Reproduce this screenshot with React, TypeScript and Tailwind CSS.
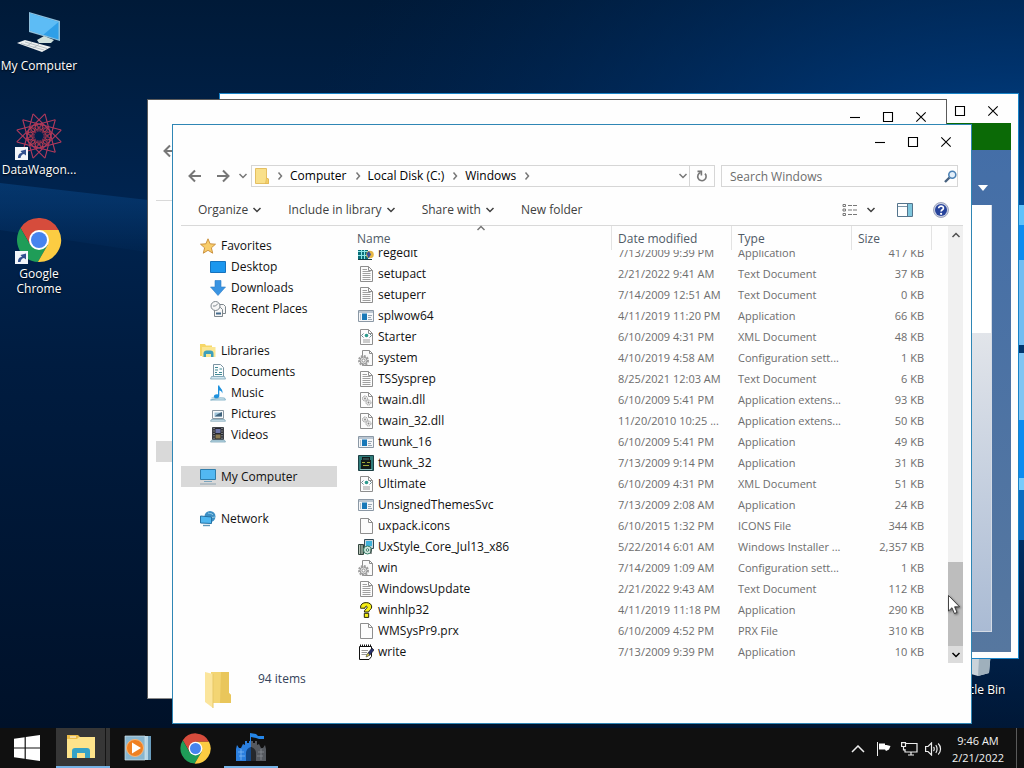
import { useLayoutEffect, useRef } from "react";
import type { ReactNode } from "react";

type FileKind =
  | "regedit"
  | "text"
  | "app"
  | "xml"
  | "config"
  | "dll"
  | "twunk"
  | "blank"
  | "installer"
  | "help"
  | "write";

interface FileRow {
  name: string;
  date: string;
  type: string;
  size: string;
  kind: FileKind;
}

const files: FileRow[] = [
  { name: "regedit", date: "7/13/2009 9:39 PM", type: "Application", size: "417 KB", kind: "regedit" },
  { name: "setupact", date: "2/21/2022 9:41 AM", type: "Text Document", size: "37 KB", kind: "text" },
  { name: "setuperr", date: "7/14/2009 12:51 AM", type: "Text Document", size: "0 KB", kind: "text" },
  { name: "splwow64", date: "4/11/2019 11:20 PM", type: "Application", size: "66 KB", kind: "app" },
  { name: "Starter", date: "6/10/2009 4:31 PM", type: "XML Document", size: "48 KB", kind: "xml" },
  { name: "system", date: "4/10/2019 4:58 AM", type: "Configuration sett...", size: "1 KB", kind: "config" },
  { name: "TSSysprep", date: "8/25/2021 12:03 AM", type: "Text Document", size: "6 KB", kind: "text" },
  { name: "twain.dll", date: "6/10/2009 5:41 PM", type: "Application extens...", size: "93 KB", kind: "dll" },
  { name: "twain_32.dll", date: "11/20/2010 10:25 ...", type: "Application extens...", size: "50 KB", kind: "dll" },
  { name: "twunk_16", date: "6/10/2009 5:41 PM", type: "Application", size: "49 KB", kind: "app" },
  { name: "twunk_32", date: "7/13/2009 9:14 PM", type: "Application", size: "31 KB", kind: "twunk" },
  { name: "Ultimate", date: "6/10/2009 4:31 PM", type: "XML Document", size: "51 KB", kind: "xml" },
  { name: "UnsignedThemesSvc", date: "7/13/2009 2:08 AM", type: "Application", size: "24 KB", kind: "app" },
  { name: "uxpack.icons", date: "6/10/2015 1:32 PM", type: "ICONS File", size: "344 KB", kind: "blank" },
  { name: "UxStyle_Core_Jul13_x86", date: "5/22/2014 6:01 AM", type: "Windows Installer ...", size: "2,357 KB", kind: "installer" },
  { name: "win", date: "7/14/2009 1:09 AM", type: "Configuration sett...", size: "1 KB", kind: "config" },
  { name: "WindowsUpdate", date: "2/21/2022 9:43 AM", type: "Text Document", size: "112 KB", kind: "text" },
  { name: "winhlp32", date: "4/11/2019 11:18 PM", type: "Application", size: "290 KB", kind: "help" },
  { name: "WMSysPr9.prx", date: "6/10/2009 4:52 PM", type: "PRX File", size: "310 KB", kind: "blank" },
  { name: "write", date: "7/13/2009 9:39 PM", type: "Application", size: "10 KB", kind: "write" },
];

/* ---------- small glyphs ---------- */

function Chevron({ dir = "down", className = "" }: { dir?: "down" | "up" | "right"; className?: string }) {
  const d = { down: "M1.5 3L5 6.5 8.5 3", up: "M1.5 7L5 3.5 8.5 7", right: "M3.5 1.5L6.5 5 3.5 8.5" }[dir];
  return (
    <svg viewBox="0 0 10 10" className={`size-[10px] shrink-0 ${className}`} fill="none" stroke="currentColor" strokeWidth="1.5">
      <path d={d} />
    </svg>
  );
}

function Arrow({ flip = false }: { flip?: boolean }) {
  return (
    <svg viewBox="0 0 14 14" className={`size-[14px] ${flip ? "-scale-x-100" : ""}`} fill="none" stroke="#777" strokeWidth="2">
      <path d="M13 7H2M7 1.5L1.5 7 7 12.5" />
    </svg>
  );
}

function Page({ children }: { children?: ReactNode }) {
  return (
    <g>
      <path d="M2.5 .5H10.5L14.5 4.5V15.5H2.5Z" fill="#fcfcfc" stroke="#8e8e8e" />
      <path d="M10.5 .5V4.5H14.5" fill="none" stroke="#8e8e8e" />
      {children}
    </g>
  );
}

const fileGlyphs: Record<FileKind, ReactNode> = {
  regedit: (
    <g>
      <path d="M0 2H10V14H0Z" fill="#0b6e78" />
      <path d="M0 6.5H10M0 10.5H10M3.5 2V14M6.5 2V14" stroke="#8fe6e8" />
      <circle cx="12" cy="9.5" r="3.8" fill="#e5b645" />
      <path d="M8.5 8.5L11 6 13 9.5 10.5 13.5Z" fill="#3b4f9e" />
      <path d="M0 14.5H14" stroke="#163b42" />
    </g>
  ),
  text: (
    <Page>
      <path d="M4.5 3.5H9M4.5 5.5H12.5M4.5 7.5H12.5M4.5 9.5H12.5M4.5 11.5H12.5M4.5 13.5H12.5" stroke="#a0a0a0" />
    </Page>
  ),
  app: (
    <g>
      <path d="M.5 2.5H15.5V13.5H.5Z" fill="#f4f6f8" stroke="#8b98a5" />
      <path d="M1 4H15" stroke="#bcc7d2" strokeWidth="2" />
      <path d="M4 5.5H9V12H4Z" fill="#1878b8" />
      <path d="M2.5 6V12" stroke="#b8c4cf" />
      <path d="M10 7.5H14M10 9.5H13M10 11.5H14" stroke="#9aa7b4" />
    </g>
  ),
  xml: (
    <Page>
      <path d="M5.5 4.5L3.5 6.5 5.5 8.5M11.5 4.5L13.5 6.5 11.5 8.5" fill="none" stroke="#6e8791" />
      <circle cx="8.5" cy="6.5" r="1.8" fill="#2c9a8c" />
      <path d="M5 11H12M5 13H12" stroke="#9a9a9a" />
    </Page>
  ),
  config: (
    <g>
      <path d="M4.5 .5H11.5L14.5 3.5V15.5H4.5Z" fill="#fafafa" stroke="#8e8e8e" />
      <path d="M11.5 .5V3.5H14.5" fill="none" stroke="#8e8e8e" />
      <circle cx="5.5" cy="10.5" r="4.5" fill="none" stroke="#a0a0a0" strokeWidth="2" strokeDasharray="2 1" />
      <circle cx="5.5" cy="10.5" r="3.5" fill="#e2e2e2" stroke="#959595" />
      <circle cx="5.5" cy="10.5" r="1.5" fill="#fff" stroke="#959595" />
    </g>
  ),
  dll: (
    <Page>
      <circle cx="7" cy="6.5" r="2.5" fill="#ececec" stroke="#9a9a9a" strokeDasharray="1.5 .6" />
      <circle cx="10.5" cy="10.5" r="2.5" fill="#ececec" stroke="#9a9a9a" strokeDasharray="1.5 .6" />
      <circle cx="7" cy="6.5" r=".9" fill="#888" />
      <circle cx="10.5" cy="10.5" r=".9" fill="#888" />
    </Page>
  ),
  twunk: (
    <g>
      <path d="M.5 .5H15.5V15.5H.5Z" fill="#2f7c7a" stroke="#1d3f44" />
      <path d="M4 2H12V5H13V14H3V5H4Z" fill="#131a1a" />
      <path d="M4 7.5H7M9 7.5H12M5 10.5H11" stroke="#a0a83a" />
      <path d="M6 3V5M8 3V5M10 3V5" stroke="#4c7774" />
      <path d="M2 14.5H14" stroke="#8fc2c0" />
    </g>
  ),
  blank: <Page />,
  installer: (
    <g>
      <path d="M6.5 .5H15.5V9.5H6.5Z" fill="#c9d6de" stroke="#344b57" />
      <path d="M8 2H14V7H8Z" fill="#3fb2dc" />
      <path d="M.5 5.5H5.5V15.5H.5Z" fill="#b9c6b9" stroke="#33443d" />
      <path d="M2.5 6V15M4 6V15" stroke="#53685f" />
      <circle cx="9.5" cy="11" r="4" fill="#d5e7df" stroke="#317c66" />
      <circle cx="9.5" cy="11" r="1.3" fill="#fff" stroke="#317c66" />
      <path d="M13 10V15" stroke="#333" />
    </g>
  ),
  help: (
    <path
      d="M2.5 5.5C2.5 2.2 4.8.6 8.2.6S13.7 2.3 13.7 5C13.7 7.5 11 8 10.6 10H6.3C6.3 7.3 9.2 6.6 9.2 5.2 9.2 3.7 7 3.8 7 6.2H2.5ZM6.3 11.3H10.7V15.4H6.3Z"
      fill="#f5ee16"
      stroke="#26260a"
    />
  ),
  write: (
    <g>
      <path d="M1.5 2.5H13.5V12.5L11 15.5H1.5Z" fill="#fff" stroke="#111" />
      <path d="M2 1.5H14" stroke="#111" strokeDasharray="1 1" strokeWidth="2" />
      <path d="M3.5 6.5H10M3.5 8.5H9M3.5 10.5H9" stroke="#999" />
      <path d="M8 13L10 9 14 4 16 6 12 11Z" fill="#27306f" stroke="#111" strokeWidth=".6" />
      <path d="M8 13L10 9 11.5 11Z" fill="#d8c94a" />
    </g>
  ),
};

function FileIcon({ kind }: { kind: FileKind }) {
  return (
    <svg viewBox="0 0 16 16" className="size-4 shrink-0">
      {fileGlyphs[kind]}
    </svg>
  );
}

/* ---------- sidebar icons ---------- */

const placeGlyphs: Record<string, ReactNode> = {
  Favorites: (
    <path d="M8 .8L10.1 5.8 15.5 6.2 11.4 9.8 12.7 15.2 8 12.3 3.3 15.2 4.6 9.8 .5 6.2 5.9 5.8Z" fill="#f8cd6a" stroke="#c68a36" strokeWidth=".9" />
  ),
  Desktop: <path d="M.5 2.5H15.5V13.5H.5Z" fill="#1c97ee" stroke="#1672bd" />,
  Downloads: <path d="M5 .5H11V7H15.5L8 15.5 .5 7H5Z" fill="#3a94e2" stroke="#2c7cc6" strokeWidth=".6" />,
  "Recent Places": (
    <g fill="#f7f7f7" stroke="#7d868c">
      <path d="M9.5 3.5H13.5L15.5 5.5V12.5H9.5Z" />
      <path d="M4.5 6.5H10.5L12.5 8.5V15.5H4.5Z" />
      <circle cx="5.5" cy="5" r="4.5" />
      <path d="M5.5 5L8 2.5M3 5H5.5" />
      <path d="M6 12.5H11" stroke="#446b8c" strokeWidth="2" />
    </g>
  ),
  Libraries: (
    <g>
      <path d="M0 1H5L6 2.5H12V13H0Z" fill="#f6d768" />
      <path d="M2 4H15.5V14H2Z" fill="#fbe692" />
      <path d="M3.5 14V10.5C3.5 8.5 5 7.5 6.5 7.5H10.5C12.3 7.5 13.5 8.5 13.5 10.5V14H11V11H6V14Z" fill="#3d9fbc" />
    </g>
  ),
  Documents: (
    <g>
      <path d="M3.5 .5H10.5L13.5 3.5V12.5H3.5Z" fill="#fafcfd" stroke="#7b94a2" />
      <path d="M5 3.5H8M9.5 5H12M5 6H8M5 8.5H7M9 8.5H12M5 10.5H12" stroke="#3f8994" strokeWidth="1.2" />
      <path d="M1.5 12.5H14.5L15.5 15H.5Z" fill="#d2e6ef" stroke="#7ca4b6" strokeWidth=".8" />
    </g>
  ),
  Music: (
    <g>
      <path d="M8 .5H9.3C9.6 3 13.5 4.5 12.3 8.5 11.8 6.5 10.8 5.8 9.3 5.5V11C9.3 14.2 3.5 14.3 3.8 11.5 4 9.6 6.3 8.8 8 9.4Z" fill="#1e91dd" />
      <path d="M1.5 13L5 12.8M10 12.8L14.5 13 15.5 15H.5Z" fill="#d2e6ef" stroke="#72a8c2" strokeWidth=".8" />
    </g>
  ),
  Pictures: (
    <g>
      <path d="M2.5 4.5H13.5V12.5H2.5Z" fill="#f8fafb" stroke="#8a97a1" />
      <path d="M4.5 6.5H11.5V10.5H4.5Z" fill="#9cc2d8" />
      <path d="M4.5 10.5L8 8 12 6V10.5Z" fill="#41637c" />
      <path d="M1.5 13.5H14.5L15.5 15.2H.5Z" fill="#d2e6ef" stroke="#7ca4b6" strokeWidth=".8" />
    </g>
  ),
  Videos: (
    <g>
      <path d="M2.5 .5H13.5V12.5H2.5Z" fill="#26282e" stroke="#3d4046" />
      <path d="M4 1V12M12 1V12" stroke="#c5c8cc" strokeDasharray="1.2 1.2" />
      <path d="M5.5 2H10.5V6H5.5Z" fill="#6c75a8" />
      <path d="M5.5 7.5H10.5V11.5H5.5Z" fill="#8b7b52" />
      <path d="M1.5 13.2H14.5L15.5 15H.5Z" fill="#b8d8e6" stroke="#7ca4b6" strokeWidth=".8" />
    </g>
  ),
  "My Computer": (
    <g>
      <path d="M.5 .5H15.5V10.5H.5Z" fill="#52b8f2" stroke="#2f7dab" />
      <path d="M4 12.5H12" stroke="#7aa5be" />
      <path d="M0 15H16" stroke="#8ea3b0" />
    </g>
  ),
  Network: (
    <g>
      <circle cx="10" cy="5.5" r="5.5" fill="#3d8fc4" />
      <path d="M8 2C10 3 12 2 13 4M11 6C12 7 14 6 15 6" fill="none" stroke="#93cbe6" />
      <path d="M.5 5L11.5 6V12.5L.5 12Z" fill="#4fb7f0" stroke="#2672a4" />
      <path d="M3 14.5H10" stroke="#5f97b8" strokeWidth="1.4" />
    </g>
  ),
};

function Place({ name, child = false, selected = false }: { name: string; child?: boolean; selected?: boolean }) {
  return (
    <li className={selected ? "bg-[#d9d9d9]" : ""}>
      <a href="#" className={`flex h-[21px] items-center gap-[5px] ${child ? "pl-[29px]" : "pl-[19px]"}`}>
        <svg viewBox="0 0 16 16" className="size-4 shrink-0">
          {placeGlyphs[name]}
        </svg>
        {name}
      </a>
    </li>
  );
}

function Sidebar() {
  return (
    <nav className="flex w-[156px] shrink-0 flex-col gap-[21px] pt-[9px] text-[#111]">
      <ul>
        <Place name="Favorites" />
        <Place name="Desktop" child />
        <Place name="Downloads" child />
        <Place name="Recent Places" child />
      </ul>
      <ul>
        <Place name="Libraries" />
        <Place name="Documents" child />
        <Place name="Music" child />
        <Place name="Pictures" child />
        <Place name="Videos" child />
      </ul>
      <ul>
        <Place name="My Computer" selected />
      </ul>
      <ul>
        <Place name="Network" />
      </ul>
    </nav>
  );
}

/* ---------- windows ---------- */

function WindowFrame({ className, children }: { className: string; children: ReactNode }) {
  return (
    <section className={`absolute flex flex-col border bg-[#fefefe] ${className}`}>
      <header className="flex shrink-0 justify-end pr-[9px] pt-[7px]">
        {[
          { label: "Minimize", d: "M0 5.5H10" },
          { label: "Maximize", d: "M.5 .5H9.5V9.5H.5Z" },
          { label: "Close", d: "M.3 .3L9.7 9.7M9.7 .3L.3 9.7" },
        ].map((button) => (
          <button key={button.label} aria-label={button.label} className="flex h-5 w-[33px] items-center justify-center">
            <svg viewBox="0 0 10 10" className="size-[10px] overflow-visible" fill="none" stroke="#000" strokeWidth="1.1">
              <path d={button.d} />
            </svg>
          </button>
        ))}
      </header>
      {children}
    </section>
  );
}

function AddressBar() {
  return (
    <div className="mt-[13px] flex h-[22px] items-center pl-2 pr-[13px]">
      <button aria-label="Back" className="flex w-7 justify-center">
        <Arrow />
      </button>
      <button aria-label="Forward" className="flex w-7 justify-center">
        <Arrow flip />
      </button>
      <button aria-label="Recent pages" className="flex w-3 justify-center text-[#777]">
        <Chevron />
      </button>
      <div className="ml-0.5 flex h-full flex-1 items-center border border-[#d6d6d6] pl-[3px]">
        <svg viewBox="0 0 14 16" className="h-4 w-[14px]">
          <path d="M.5 .5H11.5V10L13.5 11V15.5H.5Z" fill="#f9e08a" stroke="#e4bf62" />
          <path d="M11.5 10L10.5 15.5H13.5V11Z" fill="#f3cf6d" stroke="#dfb34f" strokeWidth=".6" />
        </svg>
        {["Computer", "Local Disk (C:)", "Windows"].map((crumb) => (
          <span key={crumb} className="flex items-center">
            <Chevron dir="right" className="ml-1.5 mr-[5px] text-[#777]" />
            <a href="#" className="text-black">
              {crumb}
            </a>
          </span>
        ))}
        <Chevron dir="right" className="ml-1.5 text-[#777]" />
        <button aria-label="Previous locations" className="ml-auto mr-px text-[#777]">
          <Chevron />
        </button>
        <button aria-label="Refresh" className="flex h-full w-[25px] items-center justify-center border-l border-[#d6d6d6]">
          <svg viewBox="0 0 12 12" className="size-3" fill="none" stroke="#777" strokeWidth="1.6">
            <path d="M9 3.6A4.2 4.2 0 1 1 4.6 2.5" />
            <path d="M1.5 1.4H5.4V5.4" />
          </svg>
        </button>
      </div>
      <div className="ml-1.5 flex h-full w-[237px] items-center border border-[#d6d6d6] pl-2">
        <input
          type="text"
          aria-label="Search Windows"
          placeholder="Search Windows"
          className="h-full min-w-0 flex-1 bg-transparent outline-none placeholder:text-[#6d6d6d]"
        />
        <svg viewBox="0 0 13 13" className="size-[13px]" fill="none">
          <path d="M1 12L5.5 7.5" stroke="#47617f" strokeWidth="2.4" />
          <circle cx="8.3" cy="4.7" r="3.5" fill="#e3effa" stroke="#4d82b5" strokeWidth="1.6" />
        </svg>
      </div>
    </div>
  );
}

function Toolbar() {
  return (
    <div className="mx-2 flex h-[39px] items-center border-b border-[#d9d9d9] pl-[17px] pr-[14px] pt-2 text-[#3f3f3f]">
      <div className="flex items-center gap-[26px]">
        <button className="flex items-center gap-1">
          Organize <Chevron />
        </button>
        <button className="flex items-center gap-1">
          Include in library <Chevron />
        </button>
        <button className="flex items-center gap-1">
          Share with <Chevron />
        </button>
        <button>New folder</button>
      </div>
      <div className="ml-auto flex items-center">
        <button aria-label="Change view" className="flex items-center gap-2">
          <svg viewBox="0 0 16 14" className="h-[14px] w-4" fill="none" stroke="#777">
            <path d="M1 1.5H3.5V3.5H1ZM1 6H3.5V8H1ZM1 10.5H3.5V12.5H1Z" />
            <path d="M6 2.5H10M11 2.5H15M6 7H10M11 7H15M6 11.5H10M11 11.5H15" />
          </svg>
          <Chevron />
        </button>
        <button aria-label="Preview pane" className="ml-[21px]">
          <svg viewBox="0 0 16 14" className="h-[14px] w-4">
            <path d="M.5 .5H15.5V13.5H.5Z" fill="#fdfeff" stroke="#54748c" />
            <path d="M1 3.5H10" stroke="#7b95a8" />
            <path d="M10.5 1V13" stroke="#54748c" />
            <path d="M11 1H15V13H11Z" fill="#7fc6dd" />
          </svg>
        </button>
        <button aria-label="Help" className="ml-5">
          <svg viewBox="0 0 16 16" className="size-4">
            <circle cx="8" cy="8" r="7.5" fill="#c9cfe2" stroke="#8b93ad" strokeWidth=".8" />
            <circle cx="8" cy="8" r="6" fill="#27439b" />
            <path d="M5.7 6.3C5.7 3.3 10.6 3.5 10.4 6.2 10.3 7.8 8.2 7.8 8.1 9.5" fill="none" stroke="#fff" strokeWidth="1.7" />
            <circle cx="8.1" cy="11.8" r="1.1" fill="#fff" />
          </svg>
        </button>
      </div>
    </div>
  );
}

function FileList() {
  const scroller = useRef<HTMLDivElement>(null);

  // open scrolled to the end, with the first row half under the header
  useLayoutEffect(() => {
    if (scroller.current) scroller.current.scrollTop = 8;
  }, []);

  const th = "sticky top-0 z-10 h-6 border-r border-[#e3e3e3] bg-[#fefefe] pl-1.5 pt-0.5 text-left font-normal leading-none text-[#4f5a66]";

  return (
    <div className="relative ml-2 flex min-w-0 flex-1">
      <Chevron dir="up" className="absolute left-[131px] top-[-3px] z-20 text-[#777]" />
      <div ref={scroller} className="min-w-0 flex-1 overflow-y-auto pb-4 pr-4 [scrollbar-width:none]">
        <table className="w-full table-fixed border-separate border-spacing-0">
          <thead>
            <tr>
              <th className={`${th} pl-3`}>Name</th>
              <th className={`${th} w-[120px]`}>Date modified</th>
              <th className={`${th} w-[120px]`}>Type</th>
              <th className={`${th} w-[80px]`}>Size</th>
            </tr>
          </thead>
          <tbody className="text-[#6d6d6d]">
            {files.map((file) => (
              <tr key={file.name} className="whitespace-nowrap">
                <td className="h-[21px] p-0 pl-[13px] text-[#111]">
                  <div className="flex items-center gap-1">
                    <FileIcon kind={file.kind} />
                    {file.name}
                  </div>
                </td>
                <td className="p-0 pl-1.5 pt-px text-[11px]">{file.date}</td>
                <td className="p-0 pl-1.5 pt-px text-[11px]">{file.type}</td>
                <td className="p-0 pr-2 pt-px text-right text-[11px]">{file.size}</td>
              </tr>
            ))}
          </tbody>
        </table>
      </div>
      <div className="flex w-[15px] shrink-0 flex-col bg-[#f0f0f0]">
        <button aria-label="Scroll up" className="flex h-[18px] items-center justify-center text-[#505050]">
          <Chevron dir="up" />
        </button>
        <div className="mt-auto h-[84px] bg-[#bdbdbd]" />
        <button aria-label="Scroll down" className="flex h-[17px] items-center justify-center bg-[#dcdcdc] text-black">
          <Chevron />
        </button>
      </div>
    </div>
  );
}

function Explorer() {
  return (
    <WindowFrame className="left-[172px] top-[124px] h-[600px] w-[800px] border-[#2f86b5]">
      <AddressBar />
      <Toolbar />
      <div className="flex min-h-0 flex-1 pl-2 pr-2">
        <Sidebar />
        <FileList />
      </div>
      <footer className="flex h-[60px] shrink-0 items-start gap-[26px] pl-[31px] pt-2 text-[#34435a]">
        <svg viewBox="0 0 28 38" className="h-[38px] w-7">
          <path d="M7 1H25V22L27 24V32H7Z" fill="#f3d573" />
          <path d="M17 1H25V22L27 24V32H16Z" fill="#e9c65b" />
          <path d="M1 1L9 3V37L1 31Z" fill="#fbe59c" />
          <path d="M9 3V37" stroke="#e8c866" />
        </svg>
        <p>94 items</p>
      </footer>
    </WindowFrame>
  );
}

function BackgroundExplorer() {
  return (
    <WindowFrame className="left-[147px] top-[99px] h-[600px] w-[800px] border-[#5a5a5a] border-b-[#8a8a8a]">
      <div className="mt-[13px] flex h-[22px] items-center pl-2">
        <button aria-label="Back" className="flex w-7 justify-center">
          <Arrow />
        </button>
      </div>
      <div className="mx-2 h-[39px] border-b border-[#d9d9d9]" />
      <div className="ml-2 mt-60 h-[21px] w-[156px] bg-[#d9d9d9]" />
    </WindowFrame>
  );
}

function BrowserWindow() {
  return (
    <WindowFrame className="left-[219px] top-[93px] h-[566px] w-[800px] border-[#1883c7]">
      <div className="mx-[7px] mb-1.5 mt-0.5 flex flex-1 flex-col bg-linear-to-b from-[#436ea8] to-[#56779f]">
        <div className="h-[27px] bg-[#0b6a06]" />
        <div className="flex h-[55px] items-center justify-end pr-[23px] pt-5">
          <span className="mr-1.5 h-1 w-1 rounded-full bg-white" />
          <svg viewBox="0 0 10 6" className="h-1.5 w-[10px]">
            <path d="M0 0H10L5 6Z" fill="#fff" />
          </svg>
        </div>
        <div className="mb-5 mr-[19px] flex-1 border-b border-r border-[#d5dce6] bg-linear-to-b from-white from-30% via-[#e2e5ea] via-30% to-[#aabbd4]" />
      </div>
    </WindowFrame>
  );
}

/* ---------- desktop and taskbar ---------- */

function ChromeLogo({ className }: { className: string }) {
  return (
    <svg viewBox="0 0 48 48" className={className}>
      <path d="M24 14H43.6A22 22 0 0 0 5.54 12.03L15.34 29Z" fill="#d64c3c" />
      <path d="M15.34 29L5.54 12.03A22 22 0 0 0 22.86 45.97L32.66 29Z" fill="#1f9d58" />
      <path d="M32.66 29L22.86 45.97A22 22 0 0 0 43.6 14H24Z" fill="#fccc42" />
      <circle cx="24" cy="24" r="10" fill="#fff" />
      <circle cx="24" cy="24" r="8" fill="#4684ee" />
    </svg>
  );
}

function StarLogo() {
  const spokes = Array.from({ length: 12 }, (_, i) => i * 30 + 15);
  return (
    <svg viewBox="0 0 48 48" className="size-12" fill="none">
      {spokes.map((angle) => (
        <g key={angle} transform={`rotate(${angle} 24 24)`}>
          <path d="M24 1L43.9 35.5" stroke="#b23a5c" strokeWidth="1.1" />
          <path d="M24 11L30.5 35.3" stroke="#8a2d4e" strokeWidth=".8" />
          <path d="M22 15L24 12 26 15 24 18Z" stroke="#c23f52" strokeWidth=".8" />
        </g>
      ))}
      <circle cx="24" cy="24" r="4.5" fill="#01204a" />
    </svg>
  );
}

function ComputerIcon() {
  return (
    <svg viewBox="0 0 48 48" className="size-12">
      <path d="M14 4L45 13V33L14 24Z" fill="#8dbfdc" />
      <path d="M15 5.5L43.5 14V31.5L15 22.5Z" fill="#2f9fe8" />
      <path d="M15 5.5L43.5 14 28 27 15 22.5Z" fill="#5dbcf5" />
      <path d="M22 32L29 28 39 32 36 35 24 35Z" fill="#cfe0dc" />
      <path d="M2 35L10 32 36 39 27 44Z" fill="#eef1f1" />
      <path d="M6 35.5L29 42M10 34L32 40.5M12 38L17 34.5M18 40L24 36.5" stroke="#a9b4b9" strokeWidth=".8" />
    </svg>
  );
}

function DesktopIcon({ label, shortcut = false, children }: { label: string; shortcut?: boolean; children: ReactNode }) {
  return (
    <a href="#" className="flex h-[104px] w-[78px] flex-col items-center pt-2 text-center leading-[15px] text-white [text-shadow:0_1px_2px_#000]">
      <span className="relative">
        {children}
        {shortcut && (
          <svg viewBox="0 0 13 13" className="absolute bottom-0 left-0 size-[13px]">
            <path d="M0 0H13V13H0Z" fill="#f3f6fa" />
            <path d="M3 11C3 7 5 6 7 6L5.5 4 11 2.5V8.5L9 7C6.5 7.5 6 9 5.5 11Z" fill="#33518f" />
          </svg>
        )}
      </span>
      <span className="mt-0.5">{label}</span>
    </a>
  );
}

function Taskbar() {
  return (
    <footer className="flex h-10 shrink-0 items-stretch bg-[#101010] text-[#f2f2f2]">
      <button aria-label="Start" className="flex w-14 items-center justify-center pr-0.5">
        <svg viewBox="0 0 26 26" className="size-[26px]" fill="#fff">
          <path d="M0 3.7L10.6 2.2V12.4H0ZM11.8 2L26 0V12.4H11.8ZM0 13.6H10.6V23.8L0 22.3ZM11.8 13.6H26V26L11.8 24Z" />
        </svg>
      </button>
      <button aria-label="File Explorer" className="flex w-[54px] border-b-2 border-[#76b3e6] bg-[#363636]">
        <span className="flex h-full w-[50px] items-center justify-center border-r border-[#151515]">
          <svg viewBox="0 0 30 24" className="h-6 w-[30px]">
            <path d="M1 0H12L14 2H28V10H1Z" fill="#edbd48" />
            <path d="M1 4H11L13 2H29V23H1Z" fill="#fde38b" />
            <path d="M6 23V16C6 14 7 13 9 13H21C23 13 24 14 24 16V23H19V18H11V23Z" fill="#35a2c7" />
            <path d="M4 2H10" stroke="#fff" />
          </svg>
        </span>
      </button>
      <button aria-label="Media Player" className="flex w-14 items-center justify-center">
        <svg viewBox="0 0 28 26" className="h-[26px] w-7">
          <path d="M5 1H27V25H5Z" fill="#6a9dbd" />
          <path d="M3 1H24V25H3Z" fill="#b7d7e7" />
          <path d="M1 1H21V25H1Z" fill="#89b6cf" stroke="#d2e5ed" strokeWidth=".7" />
          <circle cx="11" cy="13" r="8.5" fill="#ef8022" stroke="#f6b77c" />
          <path d="M8 7.5L17 13 8 18.5Z" fill="#fff" />
        </svg>
      </button>
      <button aria-label="Google Chrome" className="flex w-[58px] items-center justify-center">
        <ChromeLogo className="size-[33px]" />
      </button>
      <button aria-label="Castle" className="flex w-[54px] items-center justify-center border-b-2 border-[#76b3e6]">
        <svg viewBox="0 0 32 30" className="h-[30px] w-8">
          <path d="M15 1L21 2 23 4H29V7H24L21 6 16 5V13H15Z" fill="#2586e8" />
          <path d="M1 29V17L2 13 4 16H6L8 12 10 13V9H12V11H14V9H16V29Z" fill="#2b7fdf" />
          <path d="M31 29V17L30 13 28 16H26L24 12 22 13V9H20V11H18V9H16V29Z" fill="#55595f" />
          <path d="M11 29V21C11 17 15 15 16 15V29Z" fill="#134684" />
          <path d="M21 29V21C21 17 17 15 16 15V29Z" fill="#25282c" />
          <path d="M3 20H9M4 24H10M6 17V28" stroke="#7db9f5" strokeWidth=".8" />
          <path d="M23 20H29M22 24H28M26 17V28" stroke="#888d93" strokeWidth=".8" />
        </svg>
      </button>
      <div className="ml-auto flex items-center pt-0.5">
        <button aria-label="Show hidden icons" className="mr-3">
          <svg viewBox="0 0 14 8" className="h-2 w-[14px]" fill="none" stroke="#eee" strokeWidth="1.5">
            <path d="M1 7L7 1 13 7" />
          </svg>
        </button>
        <svg viewBox="0 0 14 14" className="mr-[10px] size-[14px]">
          <path d="M.5 0V14" stroke="#eee" />
          <path d="M2 1.5H8V3H9.5L13.5 4 12 7.5 9 9 8 7.5H2Z" fill="#fff" />
        </svg>
        <svg viewBox="0 0 17 14" className="mr-[7px] h-[14px] w-[17px]" fill="none" stroke="#eee" strokeWidth="1.2">
          <path d="M4 1.5H16V10H4V7M10 10V13M7 13H13" />
          <path d="M.6 .6H4.5V4.5H.6ZM2.5 4.5V8H4" />
        </svg>
        <svg viewBox="0 0 17 14" className="mr-2 h-[14px] w-[17px]" fill="none" stroke="#eee" strokeWidth="1.2">
          <path d="M.6 4.5H3L6.5 1V13L3 9.5H.6Z" />
          <path d="M8.5 5C9.5 6 9.5 8 8.5 9M10.8 3.2C12.5 5.2 12.5 8.8 10.8 10.8M13.2 1.5C16.3 4.5 16.3 9.5 13.2 12.5" />
        </svg>
        <time className="w-[56px] whitespace-nowrap text-center text-[11px] leading-[17px]">
          9:46 AM
          <br />
          2/21/2022
        </time>
      </div>
      <div className="ml-[10px] mr-[7px] w-px bg-[#5a5a5a]" />
    </footer>
  );
}

function Wallpaper() {
  return (
    <svg viewBox="0 0 1024 728" preserveAspectRatio="none" className="absolute inset-0 h-full w-full">
      <defs>
        <linearGradient id="sky" x1="0" y1="0" x2="0" y2="1">
          <stop offset="0" stopColor="#001a38" />
          <stop offset=".28" stopColor="#002450" />
          <stop offset=".5" stopColor="#001c40" />
          <stop offset="1" stopColor="#001129" />
        </linearGradient>
        <radialGradient id="glow" cx="1" cy=".4" r=".75">
          <stop offset="0" stopColor="#0060b8" />
          <stop offset=".4" stopColor="#003a7c" stopOpacity=".75" />
          <stop offset="1" stopColor="#002450" stopOpacity="0" />
        </radialGradient>
        <linearGradient id="beam" x1="0" y1="0" x2="0" y2="1">
          <stop offset="0" stopColor="#0a4a8c" stopOpacity=".5" />
          <stop offset="1" stopColor="#0a4a8c" stopOpacity="0" />
        </linearGradient>
      </defs>
      <path d="M0 0H1024V728H0Z" fill="url(#sky)" />
      <path d="M0 0H1024V728H0Z" fill="url(#glow)" />
      <path d="M0 183L200 206V260L0 230Z" fill="url(#beam)" />
      <path d="M1018 205H1024V225H1018Z" fill="#5fc2fb" />
      <path d="M1018 225H1024V260H1018Z" fill="#0d8cf0" />
      <path d="M1018 260H1024V345H1018Z" fill="#72bdf2" />
      <path d="M1018 345H1024V353H1018Z" fill="#00366e" />
      <path d="M1018 353H1024V420H1018Z" fill="#80c5f3" />
      <path d="M1018 420H1024V478H1018Z" fill="#0d8cf0" />
      <path d="M1018 478H1024V490H1018Z" fill="#79cbfb" />
      <path d="M1018 490H1024V540H1018Z" fill="#0b6cc0" />
    </svg>
  );
}

export default function App() {
  return (
    <div className="flex h-screen w-full flex-col overflow-hidden font-['Open_Sans','Noto_Sans',sans-serif] text-xs">
      <main className="relative min-h-0 flex-1 overflow-hidden">
        <Wallpaper />
        <div className="relative flex flex-col items-start">
          <DesktopIcon label="My Computer">
            <ComputerIcon />
          </DesktopIcon>
          <DesktopIcon label="DataWagon..." shortcut>
            <StarLogo />
          </DesktopIcon>
          <DesktopIcon label="Google Chrome" shortcut>
            <ChromeLogo className="size-12" />
          </DesktopIcon>
        </div>
        <div className="absolute left-[935px] top-[624px]">
          <DesktopIcon label="Recycle Bin">
            <svg viewBox="0 0 48 48" className="size-12">
              <path d="M10 4L42 8 39 41 28 44 14 40Z" fill="#c9d3da" />
              <path d="M30 8L42 8 39 41 28 44Z" fill="#9fb0bc" />
            </svg>
          </DesktopIcon>
        </div>
        <BrowserWindow />
        <BackgroundExplorer />
        <Explorer />
        <svg viewBox="0 0 12 20" className="absolute left-[948px] top-[595px] h-5 w-3 drop-shadow-[1px_1px_1px_#0008]">
          <path d="M.5 .5V16L4 12.7 6.4 18.5 9 17.4 6.6 11.8H11.5Z" fill="#fff" stroke="#222" strokeWidth=".8" />
        </svg>
      </main>
      <Taskbar />
    </div>
  );
}
